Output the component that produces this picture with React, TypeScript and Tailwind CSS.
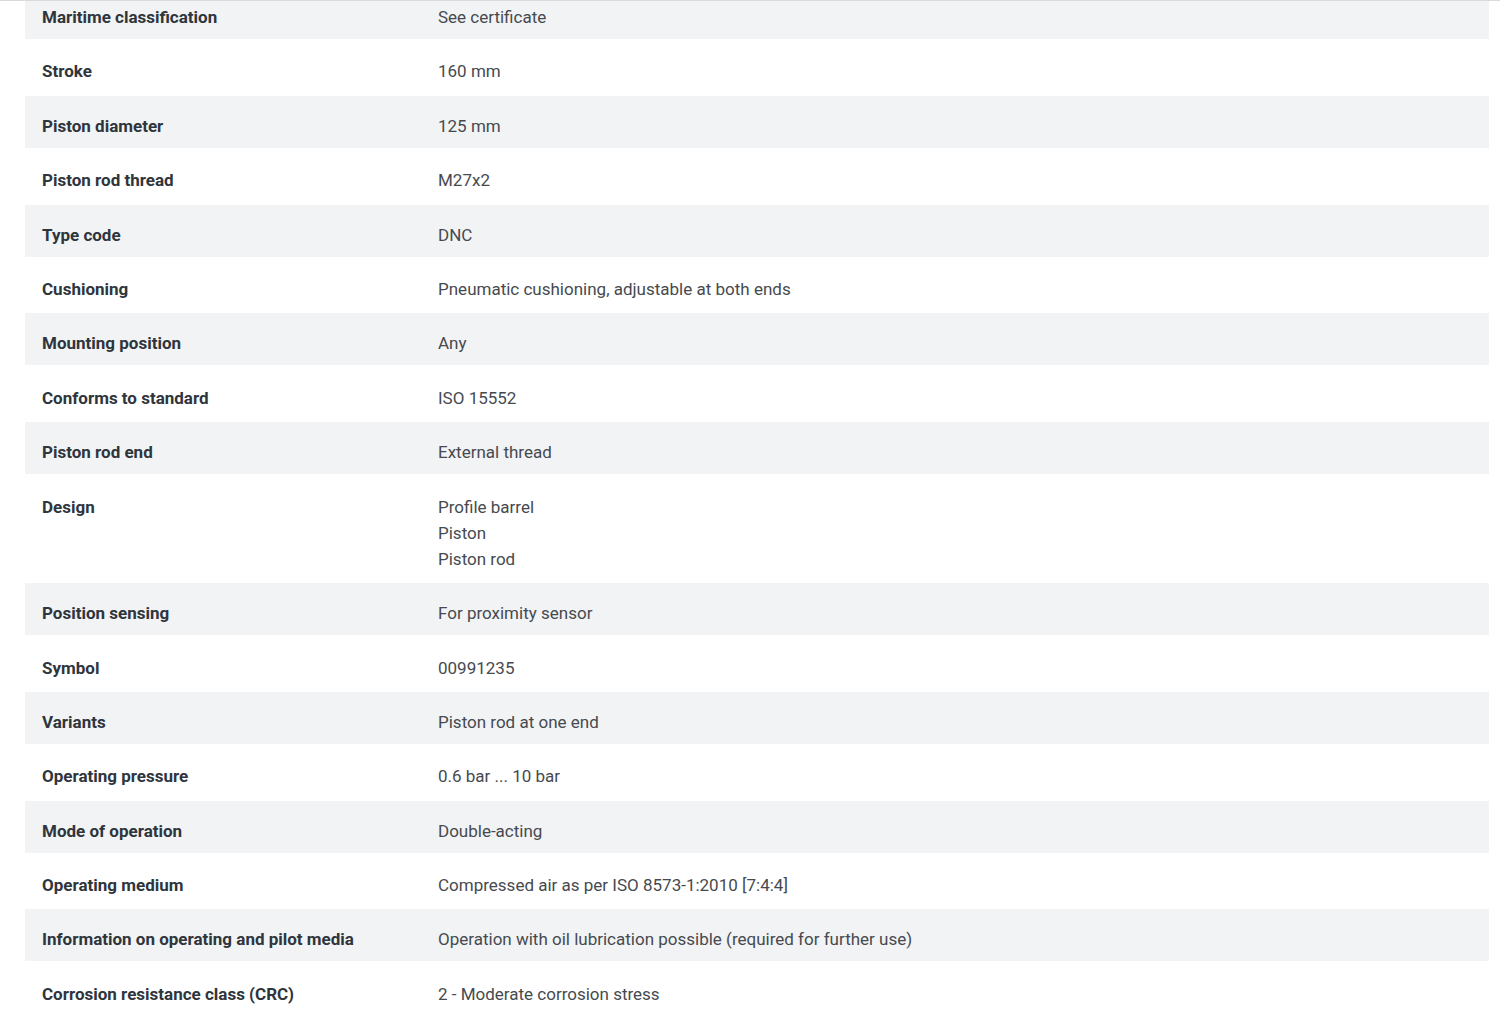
import React from "react";

const rows: [string, string[]][] = [
  ["Maritime classification", ["See certificate"]],
  ["Stroke", ["160 mm"]],
  ["Piston diameter", ["125 mm"]],
  ["Piston rod thread", ["M27x2"]],
  ["Type code", ["DNC"]],
  ["Cushioning", ["Pneumatic cushioning, adjustable at both ends"]],
  ["Mounting position", ["Any"]],
  ["Conforms to standard", ["ISO 15552"]],
  ["Piston rod end", ["External thread"]],
  ["Design", ["Profile barrel", "Piston", "Piston rod"]],
  ["Position sensing", ["For proximity sensor"]],
  ["Symbol", ["00991235"]],
  ["Variants", ["Piston rod at one end"]],
  ["Operating pressure", ["0.6 bar ... 10 bar"]],
  ["Mode of operation", ["Double-acting"]],
  ["Operating medium", ["Compressed air as per ISO 8573-1:2010 [7:4:4]"]],
  ["Information on operating and pilot media", ["Operation with oil lubrication possible (required for further use)"]],
  ["Corrosion resistance class (CRC)", ["2 - Moderate corrosion stress"]],
];

export default function App() {
  return (
    <div className="relative h-[1015px] w-[1500px] overflow-hidden bg-white" style={{ fontFamily: "Roboto, 'Noto Sans', sans-serif" }}>
      <div className="absolute left-0 right-0 top-0 z-10 h-px bg-[#d9dadc]" />
      <div className="-mt-[13px] ml-[25px] mr-[11px] flex flex-col gap-[2.4px] text-[17px] leading-[26.4px]">
        {rows.map(([label, values], i) => (
          <div key={label} className={`flex min-h-[52px] ${i % 2 === 0 ? "bg-[#f2f3f5]" : "bg-white"}`}>
            <div className="w-[396px] shrink-0 pl-[17px] pt-[17px] pb-[8px] font-bold text-[#2f353c]">{label}</div>
            <div className="pl-[17px] pt-[17px] pb-[8px] text-[#464a4f]">
              {values.map((v) => (
                <div key={v}>{v}</div>
              ))}
            </div>
          </div>
        ))}
      </div>
    </div>
  );
}
